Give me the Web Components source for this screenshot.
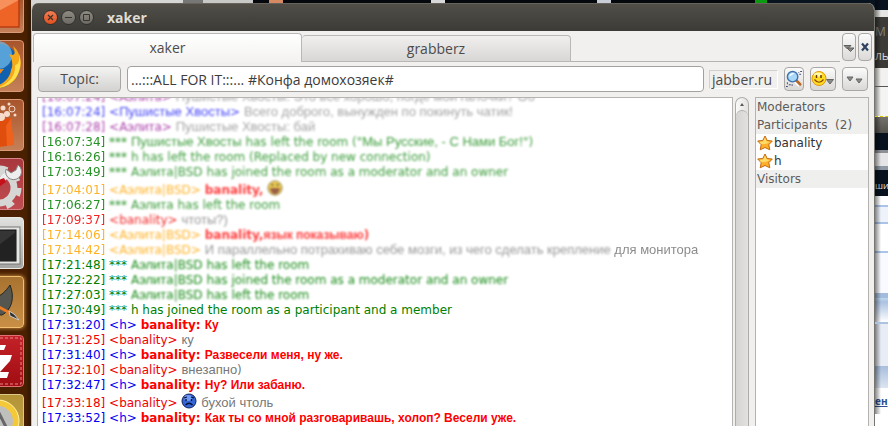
<!DOCTYPE html>
<html lang="ru">
<head>
<meta charset="utf-8">
<title>xaker</title>
<style>
html, body { margin: 0; height: 100%; overflow: hidden; }
body { font: 12px/15px "DejaVu Sans", sans-serif; color: #3c3c3c; }
chat-line b { color: #f00; font-weight: bold; }
chat-line .ru { font: 13px/1 "Liberation Sans", sans-serif; }
chat-line b .ru { font: bold 12px/1 "Liberation Sans", sans-serif; }
chat-line .soft { filter: blur(1px); opacity: .9; }
</style>
</head>
<body>
<desktop-shell>
  <app-launcher slot="launcher"></app-launcher>
  <room-window heading="xaker">
    <tab-strip slot="tabs" labels="xaker,grabberz"></tab-strip>
    <room-toolbar slot="toolbar" topic="...:::ALL FOR IT:::... #Конфа домохозяек#" server="jabber.ru"></room-toolbar>
    <chat-log>
      <chat-line time="16:07:24" nick="Аэлита" tone="purple" fade="2"><span class="ru soft">Пушистые Хвосты: Это всё хорошо, погде мои галочки? Об</span></chat-line>
      <chat-line time="16:07:24" nick="Пушистые Хвосты" tone="blue" fade="2"><span class="ru soft">Всего доброго, вынужден по покинуть чатик!</span></chat-line>
      <chat-line time="16:07:28" nick="Аэлита" tone="purple" fade="2"><span class="ru soft">Пушистые Хвосты: бай</span></chat-line>
      <chat-line time="16:07:34" tone="green" fade="1"><span class="ru soft">Пушистые Хвосты</span> <span class="soft">has left the room ("<span class="ru">Мы Русские, - С Нами Бог!</span>")</span></chat-line>
      <chat-line time="16:16:26" tone="green" fade="1"><span class="soft">h has left the room (Replaced by new connection)</span></chat-line>
      <chat-line time="17:03:49" tone="green" fade="1"><span class="soft">А<span class="ru">элит</span>а|BSD has joined the room as a moderator and an owner</span></chat-line>
      <chat-line time="17:04:01" nick="Аэлита|BSD" tone="orange" fade="1"><b class="soft">banality,</b> <smiley-face mood="laugh" class="soft"></smiley-face></chat-line>
      <chat-line time="17:06:27" tone="green" fade="1"><span class="soft">А<span class="ru">элит</span>а has left the room</span></chat-line>
      <chat-line time="17:09:37" nick="banality" tone="red" fade="1"><span class="ru soft">чтоты?)</span></chat-line>
      <chat-line time="17:14:06" nick="Аэлита|BSD" tone="orange" fade="1"><b class="soft">banality,<span class="ru">язык показываю</span>)</b></chat-line>
      <chat-line time="17:14:42" nick="Аэлита|BSD" tone="orange" fade="1"><span class="ru"><span class="soft">И параллельно потрахиваю себе мозги, из чего сделать крепление</span> для монитора</span></chat-line>
      <chat-line time="17:21:48" tone="green"><span class="soft">А<span class="ru">элит</span>а|BSD has left the room</span></chat-line>
      <chat-line time="17:22:22" tone="green"><span class="soft">А<span class="ru">элит</span>а|BSD has joined the room as a moderator and an owner</span></chat-line>
      <chat-line time="17:27:03" tone="green"><span class="soft">А<span class="ru">элит</span>а|BSD has left the room</span></chat-line>
      <chat-line time="17:30:49" tone="green">h has joined the room as a participant and a member</chat-line>
      <chat-line time="17:31:20" nick="h" tone="blue"><b>banality: <span class="ru">Ку</span></b></chat-line>
      <chat-line time="17:31:25" nick="banality" tone="red"><span class="ru">ку</span></chat-line>
      <chat-line time="17:31:40" nick="h" tone="blue"><b>banality: <span class="ru">Развесели меня, ну же.</span></b></chat-line>
      <chat-line time="17:32:10" nick="banality" tone="red"><span class="ru">внезапно</span>)</chat-line>
      <chat-line time="17:32:47" nick="h" tone="blue"><b>banality: <span class="ru">Ну? Или забаню.</span></b></chat-line>
      <chat-line time="17:33:18" nick="banality" tone="red"><smiley-face mood="sad"></smiley-face> <span class="ru">бухой чтоль</span></chat-line>
      <chat-line time="17:33:52" nick="h" tone="blue"><b>banality: <span class="ru">Как ты со мной разговаривашь, холоп? Весели уже.</span></b></chat-line>
    </chat-log>
    <room-roster slot="roster"></room-roster>
  </room-window>
  <page-behind slot="behind"></page-behind>
</desktop-shell>

<script>
function element(name, render) {
  customElements.define(name, class extends HTMLElement {
    connectedCallback() {
      if (this.shadowRoot) return;
      this.attachShadow({ mode: "open" }).innerHTML = render(this);
    }
  });
}
const UI = '"Open Sans", "Noto Sans", sans-serif';

element("desktop-shell", () => `
<style>
:host { display: grid; grid-template-columns: 31px minmax(0, 1fr) 13px; height: 100vh; overflow: hidden; background: #f1f0ee; }
.middle { display: flex; flex-direction: column; min-height: 0; min-width: 0;
  background: linear-gradient(90deg, #d6d6d4 0 152px, #777 152px 172px, #c8c8c6 172px 222px, #05090e 222px 238px, #d58a61 238px 252px, #05090e 252px 400px, #d8d8d8 400px 414px, #05090e 414px 566px, #c9ced6 566px 580px, #05090e 580px 724px, #0b9a10 724px 736px, #08131f 736px) top / 100% 14px no-repeat #3c3b37;
  padding-top: 3px; box-sizing: border-box; }
.middle ::slotted(*) { flex: 1; min-height: 0; }
</style>
<slot name="launcher"></slot><div class="middle"><slot></slot></div><slot name="behind"></slot>`);

element("app-launcher", () => `
<style>
:host { display: block; background: linear-gradient(90deg, #4a2000 0 26px, #3b1c04 28px, #311804); overflow: hidden; }
nav { display: flex; flex-direction: column; align-items: flex-end; gap: 7px; padding-right: 7px; }
button { flex: none; width: 52px; height: 52px; padding: 0; border: 1px solid #d99a77; border-radius: 4px; background: linear-gradient(#a8552c, #c58058); overflow: hidden; display: block; }
button svg { display: block; width: 50px; height: 50px; }
button:first-child { height: 33px; border-radius: 0 0 4px 4px; border-top: 0; }
.red { background: linear-gradient(#a8383d, #c04c50); border-color: #d6868a; }
.term { background: linear-gradient(#e0e0de, #a5a5a3); border-color: #e9e9e7; }
.gimp { background: linear-gradient(#a87230, #c98f46); border-color: #f0c070; box-shadow: 0 0 4px #e8a850; }
.fz { background: linear-gradient(#c32228, #a00d12); border-color: #e07074; }
.ring { background: linear-gradient(#b39336, #c5a850); border-color: #dcc987; }
</style>
<nav>
<button aria-label="Files"><svg viewBox="0 0 50 50"><path d="M0 0H46V27H0Z" fill="#ee6426"/><path d="M0 0H46L22 13H0Z" fill="#f7905a"/><path d="M46 0V27H0" fill="none" stroke="#b93c10" stroke-width="1.5"/></svg></button>
<button aria-label="Firefox"><svg viewBox="0 0 50 50"><circle cx="25" cy="25" r="22" fill="#1261ae"/><circle cx="25" cy="14" r="14" fill="#73bdea" opacity=".7"/><path d="M40 5C48 12 50 23 45 34C40 45 28 49 18 46C30 45 37 37 38 29C41 23 38 16 36 13C42 16 43 12 40 5Z" fill="#f6a81b"/><path d="M46 13C51 27 43 45 25 47C37 42 43 34 42 24C45 24 47 20 46 13Z" fill="#ffdf4a"/><path d="M18 29L31 28L26 34Z" fill="#f28a1c"/></svg></button>
<button aria-label="Software Centre"><svg viewBox="0 0 50 50"><path d="M14 20L38 18L41 45L14 48Z" fill="#f0611b"/><path d="M14 20L38 18L33 26L34 46L14 48Z" fill="#e04e0d"/><g fill="#f8dccb"><circle cx="28" cy="17" r="4"/><circle cx="34" cy="14" r="3"/><circle cx="30" cy="8" r="2.5"/><circle cx="39" cy="9" r="3" fill="none" stroke="#f8dccb"/><circle cx="36" cy="4" r="1.5"/><circle cx="42" cy="15" r="1.5"/></g></svg></button>
<button class="red" aria-label="System settings"><svg viewBox="0 0 50 50"><circle cx="26" cy="29" r="15" fill="none" stroke="#d6d6d4" stroke-width="7"/><circle cx="26" cy="29" r="20" fill="none" stroke="#d6d6d4" stroke-width="5" stroke-dasharray="8 7.7"/><path d="M16 32L36 14" stroke="#eee" stroke-width="6"/><path d="M45 6A8 8 0 1 1 33 10L38 14L43 11Z" fill="#eee" stroke="#888"/><path d="M18 24L31 19L33 23L22 31Z" fill="#c5121a"/></svg></button>
<button class="term" aria-label="Terminal"><svg viewBox="0 0 50 50"><rect x="2" y="9" width="45" height="37" fill="#e6e6e4" stroke="#777"/><rect x="5" y="12" width="38" height="31" fill="#353535" stroke="#111"/><path d="M5 43L43 14V43Z" fill="#222"/></svg></button>
<button class="gimp" aria-label="GIMP"><svg viewBox="0 0 50 50"><path d="M10 20C23 24 31 17 37 8C42 20 39 33 29 38C22 38 14 34 10 29Z" fill="#55564f" stroke="#25251f"/><path d="M24 29L37 36" stroke="#ee7c20" stroke-width="3"/><path d="M36 34L41 37L46 43L37 39Z" fill="#333" stroke="#ccc"/></svg></button>
<button class="fz" aria-label="FileZilla"><svg viewBox="0 0 50 50"><rect x="2" y="2" width="46" height="46" fill="none" stroke="#e38a8d" stroke-width="1" stroke-dasharray="3 2"/><path d="M14 9H33L31 14H14ZM16 19H39L37 25L27 36H36L34 42H14L16 36L27 25H16Z" fill="#fff"/></svg></button>
<button class="ring" aria-label="Disk search"><svg viewBox="0 0 50 50"><circle cx="25" cy="26" r="18" fill="#bfc0bd" stroke="#f4c838" stroke-width="6"/><circle cx="25" cy="26" r="21" fill="none" stroke="#fff2a3"/><path d="M25 16L33 32" stroke="#666" stroke-width="3"/></svg></button>
</nav>`);

element("room-window", h => `
<style>
:host { display: flex; flex-direction: column; min-width: 0; background: #f1f0ee; border-radius: 7px 7px 0 0; overflow: hidden; border-right: 1px solid #77756f; border-left: 1px solid #c1bfbb; box-sizing: border-box; }
header { flex: none; display: flex; align-items: center; gap: 3px; height: 28px; padding-left: 12px; box-sizing: border-box; background: linear-gradient(#504e47, #3c3b37); border-top: 1px solid #65635b; margin-left: -1px; margin-right: -1px; }
header button { width: 15px; height: 15px; padding: 0; border: 1px solid #32312d; border-radius: 50%; background: linear-gradient(#8d8b82, #6b6962); display: grid; place-items: center; }
header button:first-child { background: linear-gradient(#f47d52, #e2501f); }
svg { width: 13px; height: 13px; fill: none; stroke: #35342f; }
h1 { margin: 0 0 0 10px; font: bold 14px/18px ${UI}; color: #dfdbd2; }
main { flex: 1; min-height: 0; display: grid; grid-template-columns: minmax(0, 1fr) 114px; gap: 6px; padding: 2px 5px 0; }
</style>
<header>
<button aria-label="Close"><svg viewBox="0 0 13 13"><path d="M4 4L9 9M9 4L4 9" stroke-width="1.2"/></svg></button>
<button aria-label="Minimise"><svg viewBox="0 0 13 13"><path d="M3 6.5H10"/></svg></button>
<button aria-label="Maximise"><svg viewBox="0 0 13 13"><path d="M3.500 3.500H9.500V9.500H3.500Z"/></svg></button>
<h1>${h.getAttribute("heading")}</h1></header>
<slot name="tabs"></slot><slot name="toolbar"></slot>
<main><slot></slot><slot name="roster"></slot></main>`);

element("tab-strip", h => `
<style>
:host { flex: none; display: flex; align-items: stretch; gap: 2px; height: 31px; box-sizing: border-box; padding: 2px 2px 0 1px; }
.tabs { flex: 1; display: flex; align-items: flex-end; box-shadow: inset 0 -1px #b5b3af; }
.tabs button { flex: 0 0 calc(100% / 3); height: 27px; box-sizing: border-box; border: 1px solid #bab8b4; border-left: 0; border-radius: 4px 4px 0 0; background: linear-gradient(#f0efed, #d8d7d5); font: 14px/20px ${UI}; color: #4c4c4c; padding: 0; }
.tabs button[aria-selected=true] { height: 29px; border-left: 1px solid #bab8b4; border-bottom: 0; background: linear-gradient(#fff, #f3f2f0); }
.end { width: 14px; height: 28px; padding: 0; border: 1px solid #a9a7a3; border-radius: 4px; background: linear-gradient(#fafafa, #dbdad8); display: grid; place-items: center; }
svg { width: 12px; height: 12px; }
</style>
<div class="tabs" role="tablist">${h.getAttribute("labels").split(",").map((t, i) => `<button role="tab" aria-selected="${!i}">${t}</button>`).join("")}</div>
<button class="end" aria-label="List tabs"><svg viewBox="0 0 12 12" fill="#8a8a88" stroke="#5e5e5c"><path d="M1 4.500H8L4.500 8ZM4 7H11L7.500 10.500Z"/></svg></button>
<button class="end" aria-label="Close tab"><svg viewBox="0 0 12 12" stroke="#2e4262" stroke-width="2.200"><path d="M3 2.500L9 9.500M9 2.500L3 9.500"/></svg></button>`);

element("room-toolbar", h => `
<style>
:host { flex: none; display: flex; align-items: center; gap: 6px; height: 33px; box-sizing: border-box; padding: 4px 6px 3px; font: 14px/20px ${UI}; }
button { height: 24px; width: 26px; box-sizing: border-box; padding: 0; border: 1px solid #a9a7a3; border-radius: 4px; background: linear-gradient(#fbfbfb, #d9d8d6); display: flex; align-items: center; justify-content: center; font: inherit; color: #4c4c4c; }
.topic { width: 83px; height: 26px; background: linear-gradient(#f4f4f3, #d3d2d0); }
.find { width: 20px; }
.field { flex: 1; min-width: 0; display: flex; }
input { flex: 1; min-width: 0; height: 26px; box-sizing: border-box; border: 1px solid #a3a19d; border-radius: 4px; padding: 0 3px; background: #fff; color: #3c3c3c; font: inherit; outline: 0; }
output { border: 1px solid #d3d1cd; border-right-color: #fff; border-bottom-color: #fff; padding: 0 5px 0 2px; line-height: 17px; margin-left: -1px; color: #4c4c4c; }
svg { flex: none; }
</style>
<button class="topic">Topic:</button>
<label class="field"><input aria-label="Topic" value="${h.getAttribute("topic")}"></label>
<output>${h.getAttribute("server")}</output>
<button class="find" aria-label="Search history"><svg width="18" height="18" viewBox="0 0 19 19"><path d="M11 11L16 16" stroke="#fff" stroke-width="5"/><path d="M12 11L16 15" stroke="#b5692b" stroke-width="3" stroke-linecap="round"/><circle cx="8" cy="7" r="5.500" fill="#a9d8f8" stroke="#4271b0" stroke-width="1.500"/><path d="M4.500 7A4 4 0 0 1 10 3.500Z" fill="#fff"/><g fill="#4b4c78"><path d="M14 2H15V3H14ZM15 4H17V5H15ZM2 13H3V15H2ZM4 15H6V16H4ZM1 17H3V18H1ZM16 1H18V2H16ZM7 15H8V17H7Z"/></g></svg></button>
<button aria-label="Smileys"><svg width="24" height="18" viewBox="0 0 24 18"><circle cx="8" cy="8.500" r="7" fill="#ffdc23" stroke="#e2970f"/><ellipse cx="7" cy="4.500" rx="4" ry="2" fill="#fff9a8"/><path d="M5.500 5V8M10 5V8" stroke="#6a3900" stroke-width="1.500"/><path d="M3.500 9.500Q8 15 12.500 9.500" fill="none" stroke="#8a4500" stroke-width="1.200"/><path d="M15.500 9.500H22.500L19 14Z" fill="#8a8a88" stroke="#666"/></svg></button>
<button aria-label="Room menu"><svg width="20" height="12" viewBox="0 0 20 12" fill="#8a8a88" stroke="#666"><path d="M2 4H8L5 8ZM11 6H17L14 10Z"/></svg></button>`);

element("chat-log", () => `
<style>
:host { display: flex; gap: 2px; min-width: 0; min-height: 0; }
.view { flex: 1; min-width: 0; display: flex; flex-direction: column; justify-content: flex-end; overflow: hidden; background: #fff; border: 1px solid #b5b3af; border-bottom: 0; padding-left: 4px; }
.bar { width: 14px; box-sizing: border-box; display: flex; flex-direction: column; border: 1px solid #aeaca8; border-bottom: 0; border-radius: 7px 7px 0 0; background: linear-gradient(90deg, #fafafa, #e4e3e1); }
.up { height: 12px; display: grid; place-items: center; }
.up::before { content: ""; border: 2px solid transparent; border-bottom: 3px solid #5a5a58; border-top: 0; }
.thumb { flex: 1; border-top: 1px solid #aeaca8; border-radius: 7px 7px 0 0; background: linear-gradient(90deg, #d5d4d2, #e2e1df); }
</style>
<div class="view" role="log"><slot></slot></div>
<div class="bar"><div class="up"></div><div class="thumb"></div></div>`);

element("chat-line", h => {
  const nick = h.getAttribute("nick"), tone = h.getAttribute("tone");
  const inks = { green: "#008000", blue: "#0000f5", red: "#f00000", purple: "#900090", orange: "#ffa500" };
  const mark = (nick || "").replace(/[б-яБ-Я]+/g, s => `<i>${s}</i>`);
  return `
<style>
:host { flex: none; display: block; min-height: 15px; line-height: 15px; white-space: nowrap; color: ${nick ? "#787878" : inks[tone]}; }
.who { color: ${inks[tone]}; }
i { font: 13px/1 "Liberation Sans", sans-serif; }
:host([fade]) { opacity: .85; }
:host([fade="2"]) { opacity: .75; }
:host([fade]) .nick, :host([fade="2"]) time { filter: blur(1px); }
time, .nick { display: inline-block; }
</style><span class="who"><time>[${h.getAttribute("time")}]</time> <span class="nick">${nick ? `&lt;${mark}&gt;` : "***"}</span></span> <slot></slot>`;
});

element("smiley-face", h => `
<style>
:host { display: inline-block; width: 16px; height: 17px; vertical-align: -3px; }
svg { display: block; width: 16px; height: 16px; }
</style>` + (h.getAttribute("mood") === "sad"
  ? `<svg viewBox="0 0 16 16"><circle cx="8" cy="8" r="7" fill="#3465d6" stroke="#12225c"/><ellipse cx="7" cy="5" rx="4" ry="3" fill="#6e9bf5"/><path d="M3 5L6 4M10 4L13 5M5 6V8M10.500 6V8M4.500 12Q8 8.500 11.500 12" fill="none" stroke="#06102e" stroke-width="1.300"/></svg>`
  : `<svg viewBox="0 0 16 16"><circle cx="8" cy="8" r="7" fill="#f0c71c" stroke="#6b4e08"/><path d="M4 5H7M9 5H12" stroke="#402800" stroke-width="1.500"/><path d="M3 8H13Q12 14 8 14Q4 14 3 8Z" fill="#7a2d10"/></svg>`));

element("room-roster", () => {
  const star = `<svg width="16" height="16" viewBox="0 0 16 16"><path d="M8 1L10.200 5.500L15.300 6L11.800 9.700L12.800 14.800L8 12.500L3.200 14.800L4.200 9.700L.7 6L5.800 5.500Z" fill="#ffae27" stroke="#c06a12"/><path d="M8 2.500L9.500 6.300L13 7Q8 10 4 9L2.500 7L6.300 6.300Z" fill="#ffdc68"/></svg>`;
  return `
<style>
:host { display: block; min-height: 0; background: #fff; border: 1px solid #b5b3af; border-bottom: 0; box-sizing: border-box; line-height: 18px; }
h2 { margin: 0; padding-left: 1px; font: inherit; color: #5c5c5c; background: #efefee; white-space: pre; }
ul { margin: 0; padding: 0; list-style: none; }
li { display: flex; align-items: center; gap: 1px; padding-left: 1px; height: 18px; color: #333; }
</style>
<h2>Moderators</h2><h2>Participants  (2)</h2><ul><li>${star}banality</li><li>${star}h</li></ul><h2>Visitors</h2>`;
});

element("page-behind", () => `
<style>
:host { display: flex; flex-direction: column; overflow: hidden; white-space: nowrap; background: #fff; font: 13px/18px ${UI}; }
div { flex: none; box-sizing: border-box; position: relative; }
div::after { content: ""; position: absolute; inset: 0 auto 0 0; width: 6px; background: linear-gradient(90deg, #0007, #0000); }
.sky { height: 10px; background: #08131f; }
.edge { height: 7px; background: #e4e4e2; }
.menu { height: 51px; background: #3c3b37; color: #d8d5cc; font-size: 12px; padding-top: 3px; }
.menu span { display: block; height: 24px; line-height: 24px; } .menu span:first-child { color: #85837c; }
.box { height: 19px; background: #f2f1ef; border-bottom: 1px solid #555; }
.blank { height: 30px; background: #f4f4f2; border-bottom: 1px dashed #d6c900; }
.grey { height: 16px; background: linear-gradient(#74716c, #54524d); }
.navy { height: 17px; background: #07121e; }
.light { height: 20px; background: linear-gradient(#8c8f94 3px, #e5e5e7 3px 16px, #8f99a5 16px); }
.tag { height: 26px; background: #07121e; color: #d8e4ee; font-size: 9px; line-height: 32px; }
.rows { height: 102px; background: linear-gradient(#fff 9px, #a9c4e8 9px 11px, #eef3fb 11px 26px, #a9c4e8 26px 28px, #fff 28px 55px, #a9c4e8 55px 57px, #f8faff 57px 97px, #a3bbdc 97px); }
.fade { height: 24px; background: linear-gradient(#bfd9ef, #abc2e2 4px, #fff); }
.panel { height: 44px; background: #e8ecf5; border-top: 2px solid #abc2e2; }
.foot { height: 22px; background: linear-gradient(#a8bedd, #dce5f1); }
a { color: #2c4f8c; font: bold 10px/26px ${UI}; }
</style>
<div class="sky"></div><div class="edge"></div><div class="menu"><span>М</span><span>ль</span></div><div class="box"></div><div class="blank"></div><div class="grey"></div><div class="navy"></div><div class="light"></div><div class="tag">ши</div><div class="rows"></div><div class="fade"></div><div class="panel"></div><div class="foot"></div><div><a href="#">ен</a></div>`);
</script>
</body>
</html>
